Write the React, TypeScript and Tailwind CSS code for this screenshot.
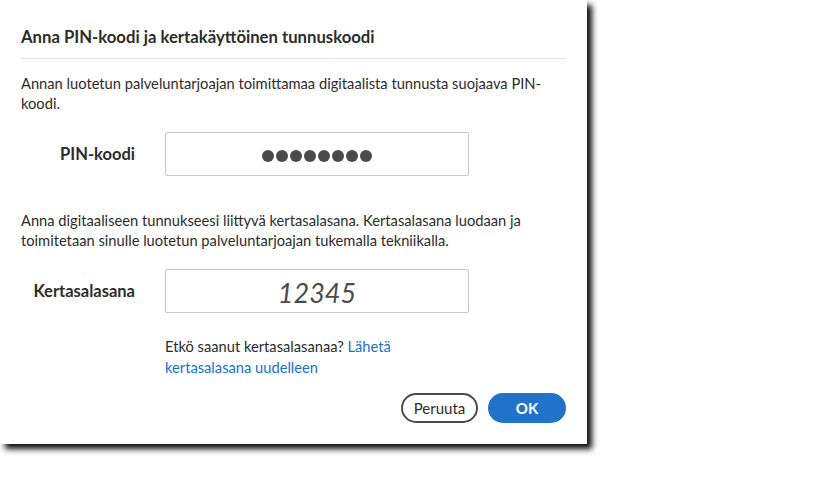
import React from "react"

export default function App() {
  const dots = Array.from({ length: 8 })

  return (
    <div className="w-[830px] h-[483px] bg-white overflow-hidden" style={{ fontFamily: "Lato, 'Noto Sans', sans-serif" }}>
      <div className="w-[587px] h-[444px] bg-white shadow-[5px_5px_6px_rgba(0,0,0,0.95)] px-[21px] pt-[26px] flex flex-col text-[#2c2c2c]">
        {/* otsikko */}
        <h1 className="text-[16.7px] leading-[22px] font-bold">Anna PIN-koodi ja kertakäyttöinen tunnuskoodi</h1>
        <div className="mt-[10px] h-px bg-[#e3e3e3]" />

        <p className="mt-[14px] text-[14.7px] leading-[20px]">
          Annan luotetun palveluntarjoajan toimittamaa digitaalista tunnusta suojaava PIN-koodi.
        </p>

        <div className="mt-[19px] flex items-center">
          <label className="w-[114px] text-right text-[16.5px] font-bold">PIN-koodi</label>
          <div className="ml-[30px] w-[304px] h-[44px] border border-[#c8c8c8] rounded-[2px] flex items-center justify-center pt-[4px]">
            <div className="flex gap-[2px]">
              {dots.map((_, i) => (
                <span key={i} className="w-[12px] h-[12px] rounded-full bg-[#4b4b4b]" />
              ))}
            </div>
          </div>
        </div>

        <p className="mt-[34px] text-[14.7px] leading-[20px]">
          Anna digitaaliseen tunnukseesi liittyvä kertasalasana. Kertasalasana luodaan ja toimitetaan sinulle luotetun palveluntarjoajan tukemalla tekniikalla.
        </p>

        <div className="mt-[19px] flex items-center">
          <label className="w-[114px] text-right text-[16.5px] font-bold">Kertasalasana</label>
          <div className="ml-[30px] w-[304px] h-[44px] border border-[#c8c8c8] rounded-[2px] flex items-center justify-center pt-[2px]">
            <span className="text-[27px] italic text-[#4b4b4b] leading-none">12345</span>
          </div>
        </div>

        <p className="mt-[23px] ml-[144px] w-[304px] text-[14.7px] leading-[21px]">
          Etkö saanut kertasalasanaa? <span className="text-[#1a6fd0]">Lähetä kertasalasana uudelleen</span>
        </p>

        <div className="mt-[15px] flex justify-end gap-[10px]">
          <button className="w-[77px] h-[30px] rounded-full border-2 border-[#4b4b4b] text-[15px] text-[#2c2c2c]">Peruuta</button>
          <button className="w-[78px] h-[30px] rounded-full bg-[#2172c9] text-white text-[15px] font-bold">OK</button>
        </div>
      </div>
    </div>
  )
}
